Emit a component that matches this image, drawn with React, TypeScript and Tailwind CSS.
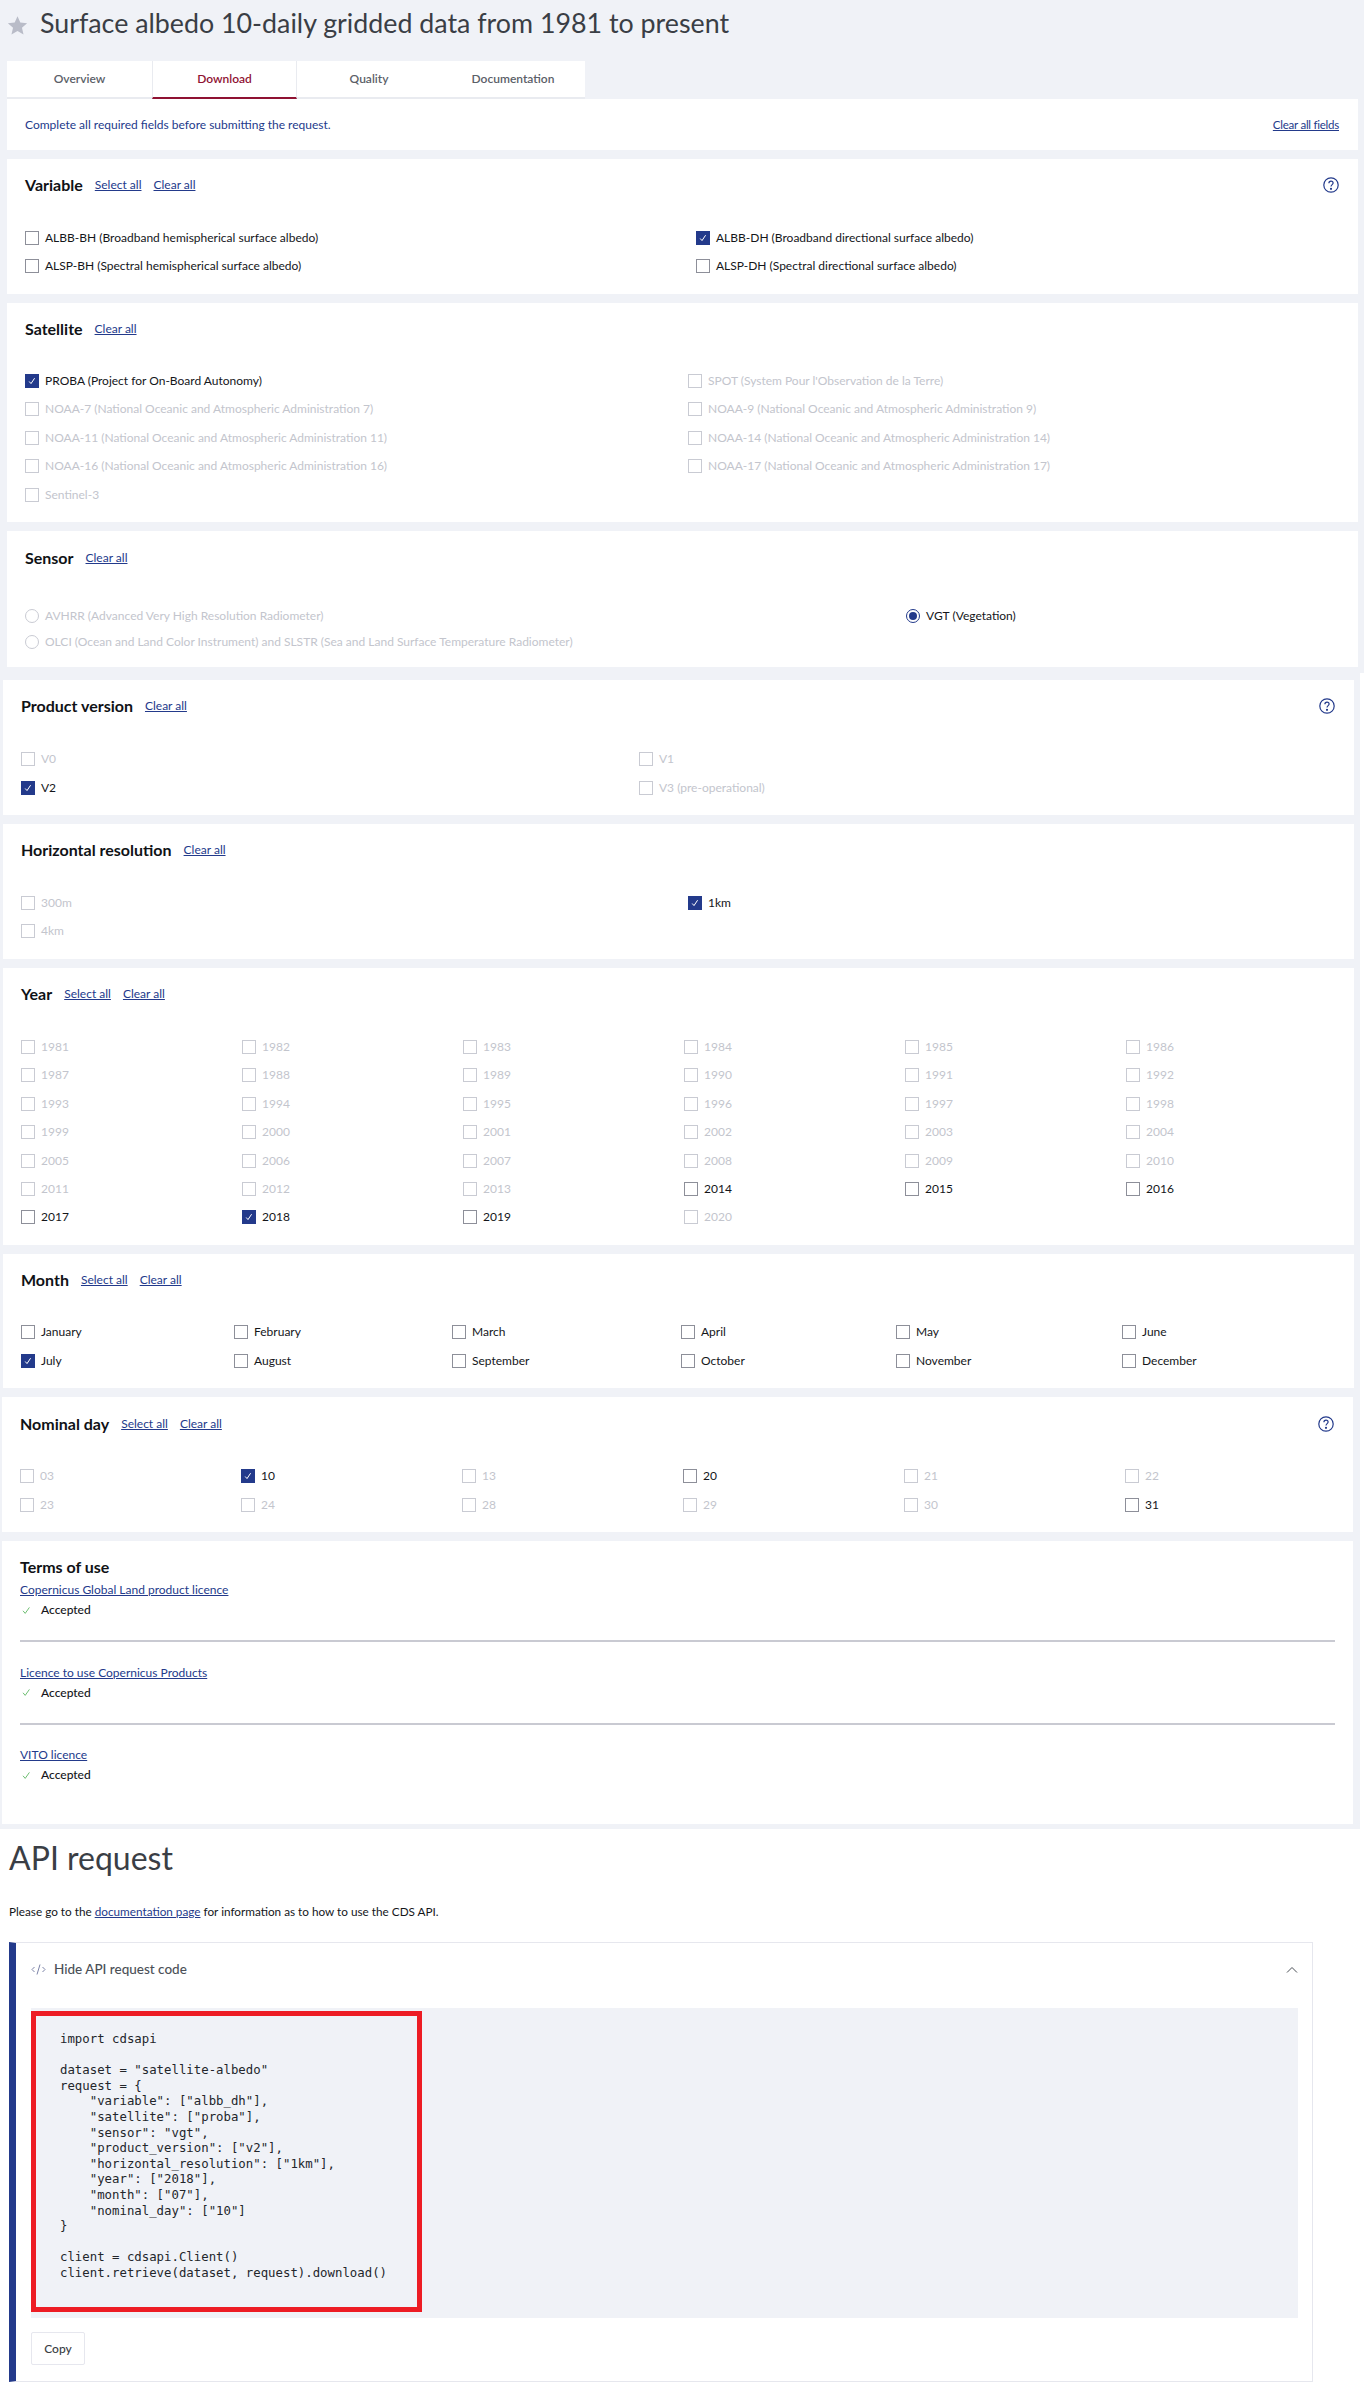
import React from "react";

const Box = ({ checked, disabled }: { checked?: boolean; disabled?: boolean }) => (
  <span className={`flex h-[14px] w-[14px] shrink-0 items-center justify-center border ${checked ? "border-[#233a8b] bg-[#233a8b]" : disabled ? "border-[#c9cbd3] bg-white" : "border-[#8d8f99] bg-white"}`}>
    {checked && (
      <svg width="10" height="10" viewBox="0 0 10 10" fill="none" stroke="white" strokeWidth="1">
        <path d="M2.2 5.5 L4 7.6 L7.6 2.2" />
      </svg>
    )}
  </span>
);

const Radio = ({ checked, disabled }: { checked?: boolean; disabled?: boolean }) => (
  <span className={`flex h-[14px] w-[14px] shrink-0 items-center justify-center rounded-full border ${checked ? "border-[#233a8b]" : disabled ? "border-[#c9cbd3]" : "border-[#8d8f99]"}`}>
    {checked && <span className="h-[8px] w-[8px] rounded-full bg-[#233a8b]" />}
  </span>
);

type Opt = { t: string; on?: boolean; off?: boolean };

const Item = ({ o, radio }: { o: Opt; radio?: boolean }) => (
  <div className={`flex h-[14px] items-center gap-[6px] text-[12px] leading-[14px] whitespace-nowrap ${o.off ? "text-[#c3c5cd]" : "text-[#14161a]"}`}>
    {radio ? <Radio checked={o.on} disabled={o.off} /> : <Box checked={o.on} disabled={o.off} />}
    <span>{o.t}</span>
  </div>
);

const Help = () => (
  <svg width="16" height="16" viewBox="0 0 16 16" fill="none" stroke="#233a8b" strokeWidth="1.2" className="shrink-0">
    <circle cx="8" cy="8" r="7.2" />
    <path d="M5.9 6.3 C5.9 4.9 6.9 4.2 8 4.2 C9.3 4.2 10.1 5 10.1 6.1 C10.1 7.6 8 7.7 8 9.6" />
    <circle cx="8" cy="11.8" r="0.5" fill="#233a8b" />
  </svg>
);

const Link = ({ children }: { children: React.ReactNode }) => (
  <a className="cursor-pointer text-[12px] leading-[14px] text-[#233a8b] underline">{children}</a>
);

const Section = ({
  title, select, help, cardClass, bodyClass, children,
}: {
  title: string; select?: boolean; help?: boolean;
  cardClass: string; bodyClass: string; children: React.ReactNode;
}) => (
  <section className={`bg-white ${cardClass}`}>
    <div className="flex h-[20px] items-center">
      <h3 className="text-[16px] font-bold leading-[20px] text-[#101216]">{title}</h3>
      {select && <span className="mb-[2px] ml-[12px] leading-[14px]"><Link>Select all</Link></span>}
      <span className="mb-[2px] ml-[12px] leading-[14px]"><Link>Clear all</Link></span>
      {help && <span className="ml-auto"><Help /></span>}
    </div>
    <div className={bodyClass}>{children}</div>
  </section>
);

const years = Array.from({ length: 40 }, (_, i) => 1981 + i);
const enabledYears = [2014, 2015, 2016, 2017, 2018, 2019];
const months = ["January","February","March","April","May","June","July","August","September","October","November","December"];
const monthCols = ["w-[213px]","w-[218px]","w-[229px]","w-[215px]","w-[226px]","w-[150px]"];
const days = ["03","10","13","20","21","22","23","24","28","29","30","31"];

const Terms = ({ t, last }: { t: string; last?: boolean }) => (
  <div className={last ? "" : "border-b-2 border-[#c9cad2] pb-[22px]"}>
    <a className="block text-[12px] leading-[16px] text-[#233a8b] underline">{t}</a>
    <div className="mt-[4px] flex h-[16px] items-center gap-[9px] text-[12px] font-medium text-[#14161a]">
      <svg width="11" height="11" viewBox="0 0 11 11" fill="none" stroke="#6fbf73" strokeWidth="1" className="ml-[1px]">
        <path d="M2 5.8 L4.2 8.4 L8.4 2.4" />
      </svg>
      <span>Accepted</span>
    </div>
  </div>
);

const code = `import cdsapi

dataset = "satellite-albedo"
request = {
    "variable": ["albb_dh"],
    "satellite": ["proba"],
    "sensor": "vgt",
    "product_version": ["v2"],
    "horizontal_resolution": ["1km"],
    "year": ["2018"],
    "month": ["07"],
    "nominal_day": ["10"]
}

client = cdsapi.Client()
client.retrieve(dataset, request).download()`;

export default function App() {
  return (
    <div className="min-h-[2392px] w-[1366px] bg-white font-['Lato','Liberation_Sans',sans-serif]">
      {/* upper block */}
      <div className="w-[1364px] bg-[#f0f2f7] pb-[6px]">
        <div className="flex h-[61px] items-start pl-[7px] pt-[6px]">
          <svg width="21" height="21" viewBox="0 0 24 24" fill="#b9bcc8" className="mt-[9px] shrink-0">
            <path d="M12 1.5 L15.2 8.6 L23 9.4 L17.1 14.6 L18.9 22.3 L12 18.2 L5.1 22.3 L6.9 14.6 L1 9.4 L8.8 8.6 Z" />
          </svg>
          <h1 className="ml-[12px] text-[26.8px] font-normal leading-[34px] text-[#3a3e45]">Surface albedo 10-daily gridded data from 1981 to present</h1>
        </div>

        <div className="ml-[7px] flex h-[38px] w-[578px] border-b-2 border-[#e9ebf0] bg-white text-[12px] font-semibold text-[#5b6068]">
          <div className="flex w-[145px] items-center justify-center">Overview</div>
          <div className="-mb-[2px] flex w-[145px] items-center justify-center border-x border-b-2 border-x-[#e9ebf0] border-b-[#8f1232] text-[#8f1232]">Download</div>
          <div className="flex w-[144px] items-center justify-center">Quality</div>
          <div className="flex w-[144px] items-center justify-center">Documentation</div>
        </div>

        <div className="ml-[7px] mr-[6px] flex h-[51px] items-center justify-between bg-white pl-[18px] pr-[19px] text-[12px] text-[#233a8b]">
          <span>Complete all required fields before submitting the request.</span>
          <a className="cursor-pointer text-[11.5px] tracking-[-0.25px] underline">Clear all fields</a>
        </div>

        <div className="mt-[9px] flex flex-col gap-[9px]">
          <Section title="Variable" select help cardClass="ml-[7px] mr-[6px] h-[135px] pl-[18px] pr-[19px] pt-[16px]" bodyClass="mt-[36px] grid grid-cols-[671px_1fr] gap-y-[14px]">
            <Item o={{ t: "ALBB-BH (Broadband hemispherical surface albedo)" }} />
            <Item o={{ t: "ALBB-DH (Broadband directional surface albedo)", on: true }} />
            <Item o={{ t: "ALSP-BH (Spectral hemispherical surface albedo)" }} />
            <Item o={{ t: "ALSP-DH (Spectral directional surface albedo)" }} />
          </Section>

          <Section title="Satellite" cardClass="ml-[7px] mr-[6px] h-[219px] pl-[18px] pt-[16px]" bodyClass="mt-[35px] grid grid-cols-[663px_1fr] gap-y-[14.4px]">
            <Item o={{ t: "PROBA (Project for On-Board Autonomy)", on: true }} />
            <Item o={{ t: "SPOT (System Pour l'Observation de la Terre)", off: true }} />
            <Item o={{ t: "NOAA-7 (National Oceanic and Atmospheric Administration 7)", off: true }} />
            <Item o={{ t: "NOAA-9 (National Oceanic and Atmospheric Administration 9)", off: true }} />
            <Item o={{ t: "NOAA-11 (National Oceanic and Atmospheric Administration 11)", off: true }} />
            <Item o={{ t: "NOAA-14 (National Oceanic and Atmospheric Administration 14)", off: true }} />
            <Item o={{ t: "NOAA-16 (National Oceanic and Atmospheric Administration 16)", off: true }} />
            <Item o={{ t: "NOAA-17 (National Oceanic and Atmospheric Administration 17)", off: true }} />
            <Item o={{ t: "Sentinel-3", off: true }} />
          </Section>

          <Section title="Sensor" cardClass="ml-[7px] mr-[6px] h-[136px] pl-[18px] pt-[17px]" bodyClass="mt-[41px] grid grid-cols-[881px_1fr] gap-y-[12px]">
            <Item radio o={{ t: "AVHRR (Advanced Very High Resolution Radiometer)", off: true }} />
            <Item radio o={{ t: "VGT (Vegetation)", on: true }} />
            <Item radio o={{ t: "OLCI (Ocean and Land Color Instrument) and SLSTR (Sea and Land Surface Temperature Radiometer)", off: true }} />
          </Section>
        </div>
      </div>

      {/* lower block */}
      <div className="flex w-[1360px] flex-col gap-[9px] bg-[#f0f2f7] pb-[5px] pt-[7px]">
        <Section title="Product version" help cardClass="ml-[3px] mr-[6px] h-[135px] pl-[18px] pr-[19px] pt-[16px]" bodyClass="mt-[36px] grid grid-cols-[618px_1fr] gap-y-[15px]">
          <Item o={{ t: "V0", off: true }} />
          <Item o={{ t: "V1", off: true }} />
          <Item o={{ t: "V2", on: true }} />
          <Item o={{ t: "V3 (pre-operational)", off: true }} />
        </Section>

        <Section title="Horizontal resolution" cardClass="ml-[3px] mr-[6px] h-[135px] pl-[18px] pt-[16px]" bodyClass="mt-[36px] grid grid-cols-[667px_1fr] gap-y-[14px]">
          <Item o={{ t: "300m", off: true }} />
          <Item o={{ t: "1km", on: true }} />
          <Item o={{ t: "4km", off: true }} />
        </Section>

        <Section title="Year" select cardClass="ml-[3px] mr-[6px] h-[277px] pl-[18px] pt-[16px]" bodyClass="mt-[36px] grid grid-cols-[221px_221px_221px_221px_221px_1fr] gap-y-[14.4px]">
          {years.map((y) => (
            <Item key={y} o={{ t: String(y), on: y === 2018, off: !enabledYears.includes(y) }} />
          ))}
        </Section>

        <Section title="Month" select cardClass="ml-[3px] mr-[6px] h-[134px] pl-[18px] pt-[16px]" bodyClass="mt-[35px] flex flex-wrap gap-y-[15px]">
          {months.map((m, i) => (
            <div key={m} className={monthCols[i % 6]}>
              <Item o={{ t: m, on: m === "July" }} />
            </div>
          ))}
        </Section>

        <Section title="Nominal day" select help cardClass="ml-[2px] mr-[7px] h-[135px] pl-[18px] pr-[19px] pt-[17px]" bodyClass="mt-[35px] grid grid-cols-[221px_221px_221px_221px_221px_1fr] gap-y-[15px]">
          {days.map((d) => (
            <Item key={d} o={{ t: d, on: d === "10", off: !["10", "20", "31"].includes(d) }} />
          ))}
        </Section>

        <section className="ml-[2px] mr-[7px] h-[283px] bg-white pl-[18px] pr-[18px] pt-[16px]">
          <h3 className="text-[16px] font-bold leading-[20px] text-[#101216]">Terms of use</h3>
          <div className="mt-[5px] flex flex-col gap-[22.5px]">
            <Terms t="Copernicus Global Land product licence" />
            <Terms t="Licence to use Copernicus Products" />
            <Terms t="VITO licence" last />
          </div>
        </section>
      </div>

      {/* API */}
      <div className="pl-[9px]">
        <h2 className="mt-[10px] text-[32px] font-normal leading-[38px] text-[#3a3e45]">API request</h2>
        <p className="mt-[27px] text-[11.75px] leading-[16px] text-[#14161a]">
          Please go to the <a className="text-[#233a8b] underline">documentation page</a> for information as to how to use the CDS API.
        </p>
        <div className="mt-[22px] h-[440px] w-[1304px] border-y border-r border-l-[7px] border-y-[#e6e7ee] border-r-[#e6e7ee] border-l-[#233a8b]">
          <div className="flex h-[65px] items-center pb-[12px] pl-[15px] pr-[14px]">
            <svg width="15" height="13" viewBox="0 0 15 13" fill="none" stroke="#7c83a8" strokeWidth="1">
              <path d="M3.5 4 L1 6.5 L3.5 9 M11.5 4 L14 6.5 L11.5 9 M9 1.5 L6 11.5" />
            </svg>
            <span className="ml-[8px] text-[13.5px] font-medium text-[#4b5057]">Hide API request code</span>
            <svg width="12" height="8" viewBox="0 0 12 8" fill="none" stroke="#4b5057" strokeWidth="1" className="ml-auto">
              <path d="M1 6.5 L6 1.5 L11 6.5" />
            </svg>
          </div>
          <div className="relative ml-[15px] mr-[14px] h-[310px] bg-[#f0f2f7]">
            <pre className="pl-[29px] pt-[24px] font-['DejaVu_Sans_Mono',monospace] text-[12.35px] leading-[15.6px] text-[#23262b]">{code}</pre>
            <div className="absolute left-0 top-[3px] h-[301px] w-[391px] border-[5px] border-[#ed1c24]" />
          </div>
          <button className="ml-[15px] mt-[14px] flex h-[33px] w-[54px] items-center justify-center rounded-[2px] border border-[#e6e7ee] bg-white text-[12px] font-medium text-[#3a3e45]">Copy</button>
        </div>
      </div>
    </div>
  );
}
